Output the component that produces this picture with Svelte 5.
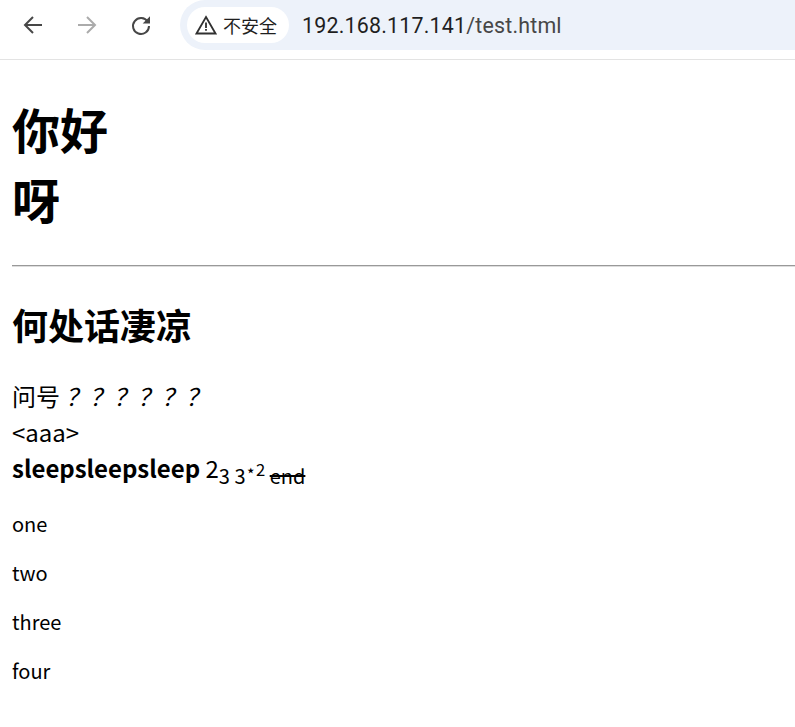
<script>
  const items = ['one', 'two', 'three', 'four'];
</script>

<div class="page">
  <header class="toolbar">
    <div class="navs">
      <svg class="nav" viewBox="0 0 24 24" width="24" height="24"><path d="M21 12H4.500M12 4l-8 8 8 8" fill="none" stroke="#474747" stroke-width="2"/></svg>
      <svg class="nav" viewBox="0 0 24 24" width="24" height="24"><path d="M3 12h16.500M12 4l8 8-8 8" fill="none" stroke="#ababab" stroke-width="2"/></svg>
      <svg class="nav" viewBox="0 0 24 24" width="24" height="24"><path d="M18.800 8.800A8 8 0 1 0 20 13" fill="none" stroke="#474747" stroke-width="2"/><path d="M21 3.200v7.300h-7.300z" fill="#474747"/></svg>
    </div>
    <div class="omnibox">
      <div class="chip">
        <svg viewBox="0 0 22 22" width="22" height="22"><path d="M11 3 20.500 19.500H1.500z" fill="none" stroke="#303030" stroke-width="1.800"/><path d="M10.100 8.500h1.800v5.500h-1.800zM10.100 15h1.800v1.800h-1.800z" fill="#303030"/></svg>
        <span>不安全</span>
      </div>
      <span class="url"><span class="host">192.168.117.141</span><span class="path">/test.html</span></span>
    </div>
  </header>
  <main>
    <h1>你好<br />呀</h1>
    <hr />
    <h2>何处话凄凉</h2>
    <p class="body">问号 <em>？？？？？？</em><br />&lt;aaa&gt;<br /><strong>sleepsleepsleep</strong> 2<sub>3 3<sup><span class="star">⋆</span>2</sup> <s>end</s></sub></p>
    {#each items as item}
      <p class="item">{item}</p>
    {/each}
  </main>
</div>

<style>
  :global(body) {
    margin: 0;
    background: #fff;
    color: #000;
    font-family: "Noto Sans CJK SC", "Noto Sans", sans-serif;
  }
  .page {
    height: 727px;
    overflow: hidden;
  }
  .toolbar {
    height: 59px;
    border-bottom: 1px solid #e3e3e3;
    display: flex;
    box-sizing: content-box;
  }
  .navs {
    display: flex;
    gap: 30px;
    padding: 13px 0 0 21px;
    width: 180px;
    box-sizing: border-box;
    flex: none;
  }
  .omnibox {
    flex: 1;
    height: 50px;
    background: #edf2fa;
    border-radius: 25px 0 0 25px;
    display: flex;
    align-items: center;
    padding-left: 7px;
  }
  .chip {
    height: 36px;
    width: 102px;
    box-sizing: border-box;
    background: #fff;
    border-radius: 18px;
    display: flex;
    align-items: center;
    gap: 6px;
    padding-left: 8px;
    font-size: 18px;
    color: #1f1f1f;
    font-family: "Noto Sans CJK SC", sans-serif;
  }
  .url {
    margin-left: 13px;
    font-family: Roboto, sans-serif;
    font-size: 21.400px;
    letter-spacing: 0.2px;
    white-space: nowrap;
  }
  .host { color: #1f1f1f; }
  .path { color: #474747; }
  main {
    padding: 0 0 0 12px;
  }
  h1 {
    font-size: 48px;
    line-height: 70px;
    font-weight: 700;
    margin: 33px 0 0;
  }
  hr {
    margin: 32px 0 0;
    border: none;
    border-top: 1px solid #999;
    height: 0;
    border-bottom: 1px solid #ddd;
  }
  h2 {
    font-size: 36px;
    line-height: 52px;
    font-weight: 700;
    margin: 31px 0 0;
  }
  .body {
    font-size: 24px;
    line-height: 36px;
    margin: 28px 0 0;
  }
  .body em { font-style: italic; }
  .body strong { font-weight: 700; }
  sub, sup { line-height: 0; }
  .star { font-family: "DejaVu Sans", sans-serif; }
  .item {
    font-size: 20px;
    line-height: 29px;
    margin: 20px 0 0;
  }
  .body + .item { margin-top: 23px; }
</style>
